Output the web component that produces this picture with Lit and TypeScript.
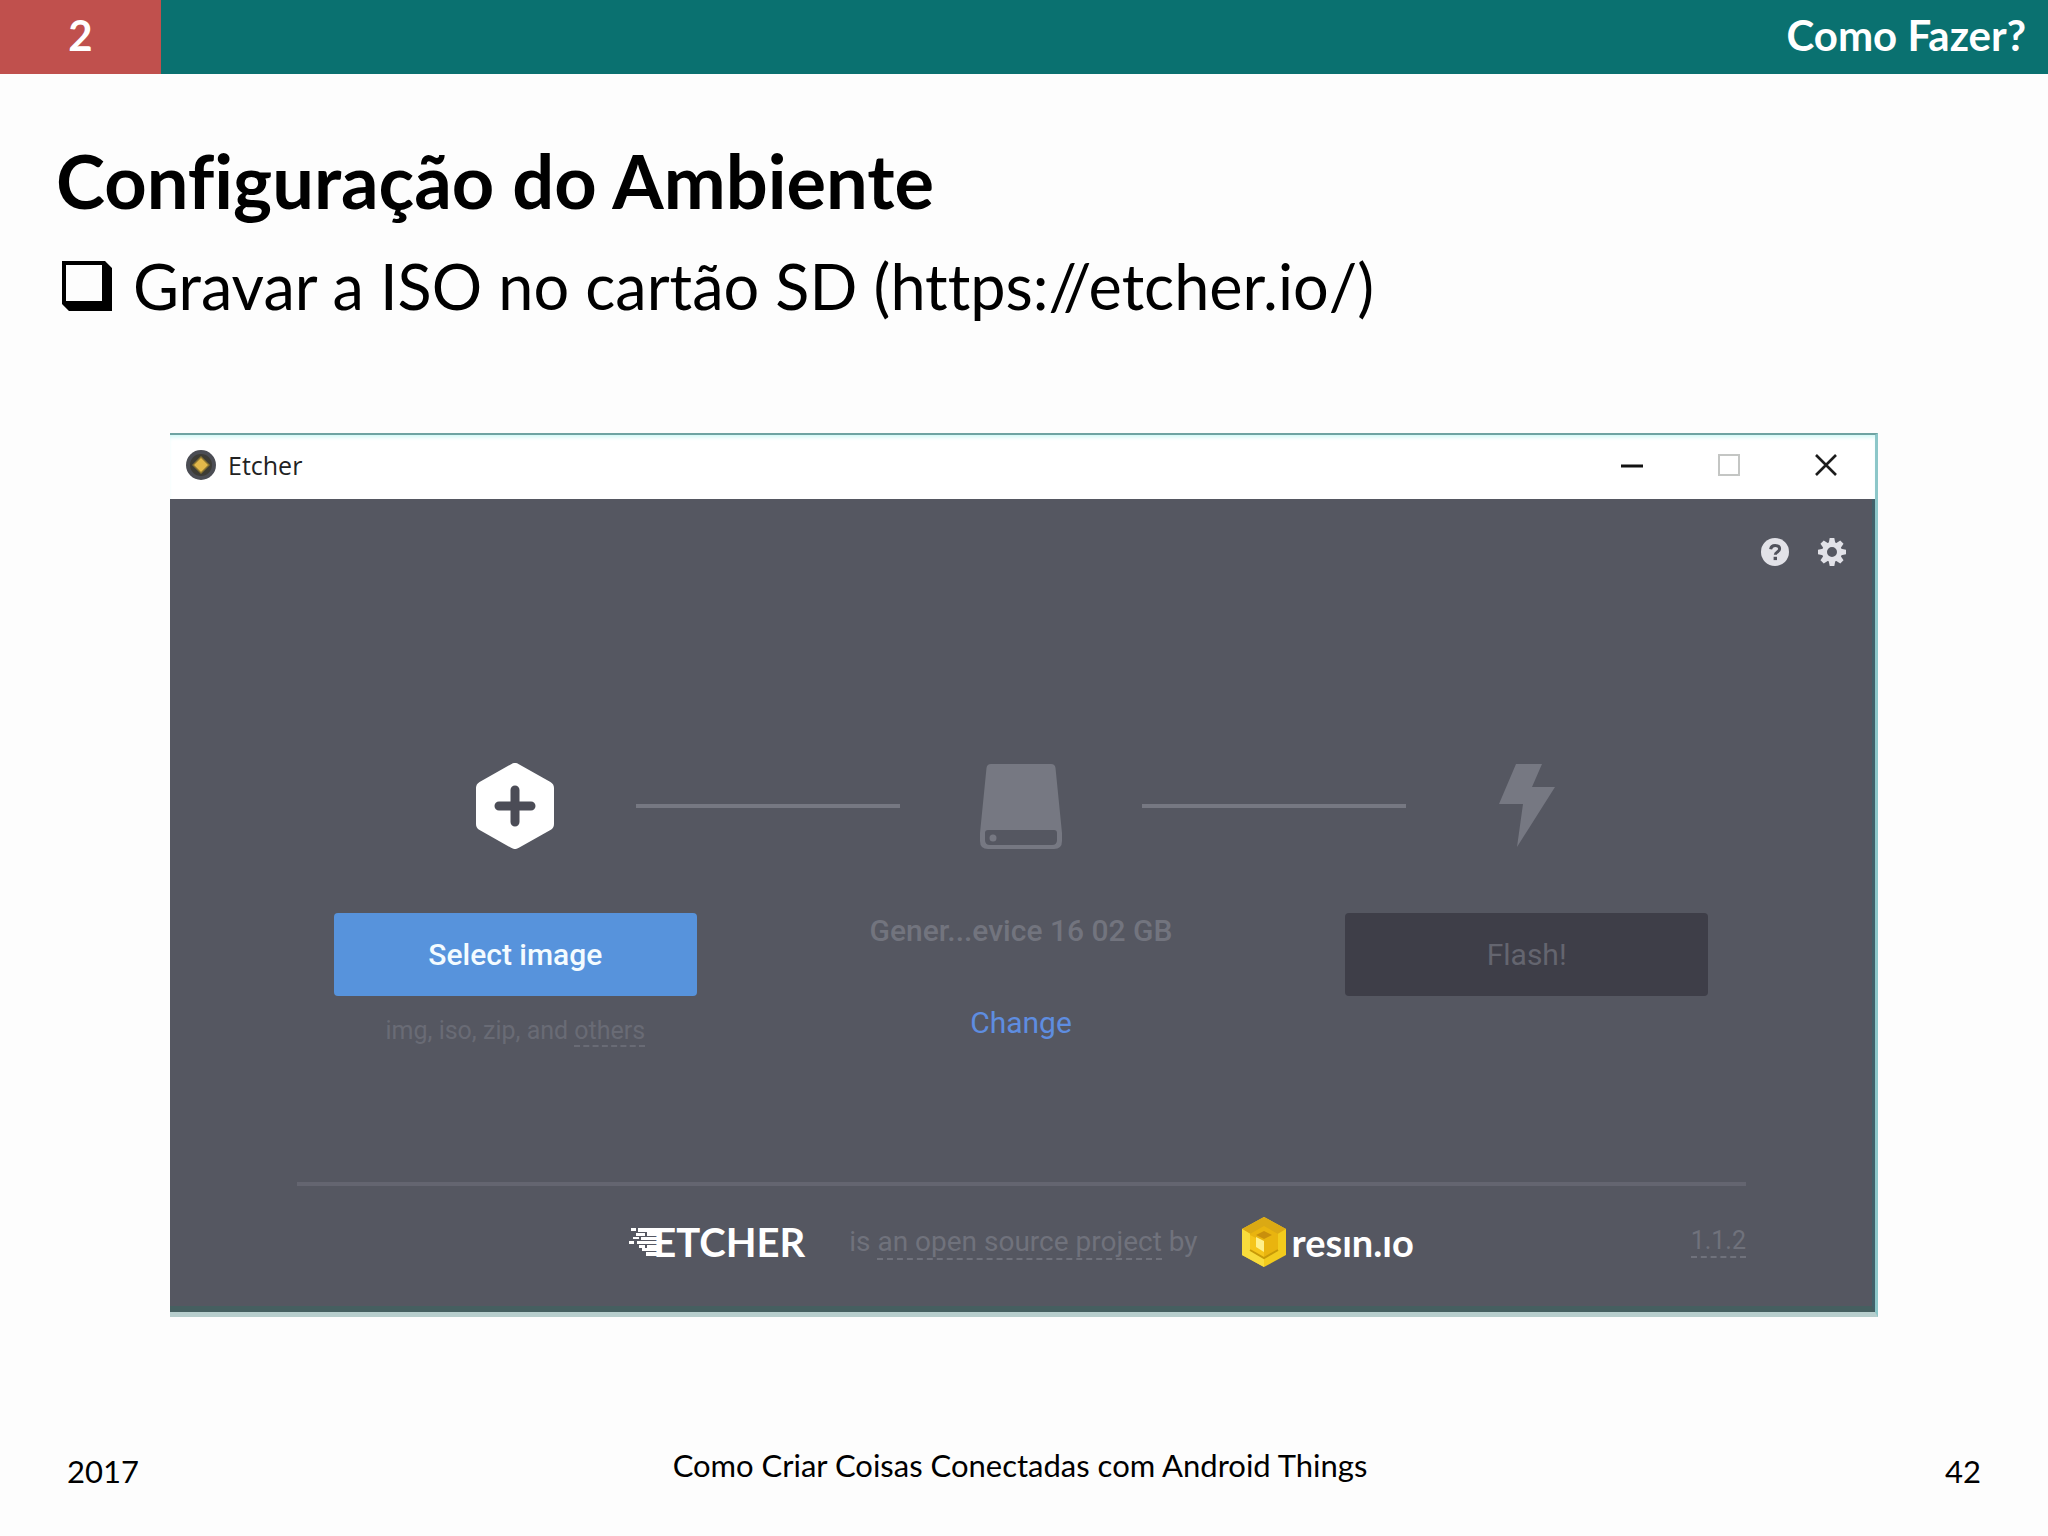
import { LitElement, html, css, svg } from "lit";
import { customElement } from "lit/decorators.js";

const appIcon = svg`<svg class="app-icon" viewBox="0 0 30 30" aria-hidden="true">
  <circle cx="15" cy="15" r="15" fill="#4b4d54"/>
  <circle cx="15" cy="15" r="11" fill="#3d3c35"/>
  <path d="M15 6l9 9-9 9-9-9z" fill="#8a7430"/>
  <path d="M15 8l7 7-7 7-7-7z" fill="#e2b84a"/>
</svg>`;

const minimizeIcon = svg`<svg class="caption-icon" viewBox="0 0 22 22" aria-hidden="true">
  <path d="M0 12h22" stroke="#111" stroke-width="3"/>
</svg>`;

const maximizeIcon = svg`<svg class="caption-icon" viewBox="0 0 22 22" aria-hidden="true">
  <path d="M1 1h20v20H1z" fill="none" stroke="#c4c6c4" stroke-width="2"/>
</svg>`;

const closeIcon = svg`<svg class="caption-icon" viewBox="0 0 22 22" aria-hidden="true">
  <path d="M1 1l20 20M21 1L1 21" stroke="#1c1c1c" stroke-width="2.6"/>
</svg>`;

const helpIcon = svg`<svg class="tool-icon" viewBox="0 0 28 28" aria-hidden="true">
  <circle cx="14" cy="14" r="14" fill="#e2e2e8"/>
  <path d="M9.600 11.200c.4-2.600 2-3.800 4.500-3.800 2.600 0 4.500 1.400 4.500 3.600 0 2.900-4.300 3-4.300 5.700" fill="none" stroke="#50525c" stroke-width="3"/>
  <path d="M12.600 18.800h3.400v3.300h-3.400z" fill="#50525c"/>
</svg>`;

const gearIcon = svg`<svg class="tool-icon" viewBox="0 0 28 28" aria-hidden="true">
  <g fill="#e2e2e8">
    ${[0, 45, 90, 135, 180, 225, 270, 315].map(
      (a) => svg`<path d="M10.500 6l1.200-6h4.600L17.500 6z" transform="rotate(${a} 14 14)"/>`
    )}
  </g>
  <circle cx="14" cy="14" r="7.500" fill="none" stroke="#e2e2e8" stroke-width="5"/>
</svg>`;

const plusIcon = svg`<svg class="step-icon" viewBox="0 0 84 86" aria-hidden="true">
  <path d="M42 7L74 25V61L42 79L10 61V25Z" fill="#fff" stroke="#fff" stroke-width="14" stroke-linejoin="round"/>
  <path d="M42 27v32M26 43h32" stroke="#4b4c56" stroke-width="9" stroke-linecap="round"/>
</svg>`;

const driveIcon = svg`<svg class="step-icon" viewBox="0 0 84 86" aria-hidden="true">
  <path fill-rule="evenodd" fill="#767882" d="M12 1h60q4 0 4.500 4L83 70v8q0 8-8 8H9q-8 0-8-8v-8L7.500 5Q8 1 12 1zM9 67q-3 0-3 3v7q0 5 5 5h62q5 0 5-5v-7q0-3-3-3z"/>
  <circle cx="14" cy="75" r="3.500" fill="#767882"/>
</svg>`;

const boltIcon = svg`<svg class="step-icon" viewBox="0 0 84 86" aria-hidden="true">
  <path fill="#767882" d="M31 1H57L47 24H70L32 84L38 41H14Z"/>
</svg>`;

const streaks = svg`<svg class="streaks" viewBox="0 0 30 28" aria-hidden="true">
  <path fill="#fff" d="M2 0h5v3H2zM9 0h21v4H9zM7 5h9v3H7zM18 4h12v4H18zM12 9h18v3H12zM4 9h6v2H4zM0 13h5v3H0zM8 13h22v3H8zM10 17h6v3h-6zM18 17h12v3H18zM13 20h17v3H13zM17 24h13v4H17z"/>
</svg>`;

const cube = svg`<svg class="cube" viewBox="0 0 44 50" aria-hidden="true">
  <path d="M22 0L44 12V38L22 50L0 38V12Z" fill="#f2cb1d"/>
  <path d="M22 0L44 12L22 25L0 12Z" fill="#dba914"/>
  <path d="M0 12L22 25V50L0 38Z" fill="#f8dc3c"/>
  <path d="M22 9L36 17V33L22 41L8 33V17Z" fill="#e9b40f"/>
  <path d="M8 18L22 25V41L8 33Z" fill="#f5c51a"/>
  <path d="M14 18l8-4 8 4-8 4z" fill="#c98f0c"/>
  <path d="M14 20l8 4v11l-8-5z" fill="#fff08a"/>
  <path d="M8 33l14 8 14-8" fill="none" stroke="#c79a08" stroke-width="2"/>
</svg>`;

@customElement("etcher-window")
export class EtcherWindow extends LitElement {
  static styles = css`
    :host {
      display: block;
      border-top: 2px solid #6fa3a2;
      border-right: 3px solid #8dc7c9;
      border-bottom: 5px solid #b7cecd;
      font-family: Roboto, "Liberation Sans", sans-serif;
    }
    button {
      border: 0;
      padding: 0;
      background: none;
      font: inherit;
      color: inherit;
      display: block;
    }
    svg { display: block; }
    .titlebar {
      display: flex;
      align-items: center;
      box-sizing: border-box;
      height: 64px;
      padding: 0 38px 4px 16px;
      background: #fff;
      box-shadow: inset 0 4px 4px -2px #cdf8f6;
    }
    .app-icon { width: 30px; height: 30px; }
    .name {
      flex: 1;
      margin-left: 12px;
      font: 25px/32px "Open Sans", "Noto Sans", sans-serif;
      color: #222;
    }
    .captions { display: flex; gap: 75px; }
    .caption-icon { width: 22px; height: 22px; }
    .body {
      background: #555761;
      border-right: 3px solid #41616a;
      border-bottom: 6px solid #455f60;
      padding-top: 39px;
    }
    .tools {
      display: flex;
      justify-content: flex-end;
      gap: 29px;
      padding-right: 26px;
    }
    .tool-icon { width: 28px; height: 28px; }
    .flow {
      display: flex;
      align-items: center;
      gap: 79px;
      margin-top: 197px;
      padding: 0 303px;
    }
    .step-icon { width: 84px; height: 86px; }
    .link-line { flex: 1; height: 4px; background: #767882; }
    .steps {
      display: grid;
      grid-template-columns: repeat(3, 1fr);
      gap: 143px;
      padding: 0 164px;
      margin-top: 64px;
      height: 202px;
    }
    .step { display: flex; flex-direction: column; align-items: center; white-space: nowrap; }
    .action {
      width: 100%;
      height: 83px;
      border-radius: 4px;
      font-size: 30px;
      font-weight: 500;
      text-align: center;
    }
    .primary { background: #5793dc; color: #f3fbff; }
    .disabled { background: #3e3e48; color: #64656f; font-weight: 400; }
    .hint { margin: 20px 0 0; font-size: 25px; line-height: 30px; color: #696b75; }
    .drive { margin: 0; font-size: 30px; line-height: 36px; color: #72747e; font-weight: 500; }
    .change { margin-top: 56px; font-size: 30px; line-height: 36px; color: #5e8de0; }
    a { color: inherit; text-decoration: none; border-bottom: 2px dashed currentColor; }
    .footer {
      display: grid;
      grid-template-columns: 1fr auto 1fr;
      align-items: center;
      margin: 67px 126px 0 127px;
      height: 112px;
      padding-bottom: 8px;
      border-top: 4px solid #646570;
      color: #70727c;
      font-size: 28px;
      line-height: 30px;
    }
    .credits { grid-column: 2; display: flex; align-items: center; gap: 44px; white-space: nowrap; }
    .brand { display: flex; align-items: center; color: #fff; font-family: Lato, sans-serif; font-weight: 700; }
    .streaks { width: 30px; height: 28px; }
    .etcher { font-size: 40px; line-height: 40px; }
    .etcher .word { margin-left: -6px; }
    .cube { width: 44px; height: 50px; margin-right: 6px; }
    .resin { font-size: 38px; line-height: 40px; }
    .version { justify-self: end; font-size: 25px; }
  `;

  render() {
    return html`
      <div class="titlebar">
        ${appIcon}
        <span class="name">Etcher</span>
        <div class="captions">
          <button aria-label="Minimize">${minimizeIcon}</button>
          <button aria-label="Maximize">${maximizeIcon}</button>
          <button aria-label="Close">${closeIcon}</button>
        </div>
      </div>
      <div class="body">
        <div class="tools">
          <button aria-label="Help">${helpIcon}</button>
          <button aria-label="Settings">${gearIcon}</button>
        </div>
        <div class="flow">
          ${plusIcon}
          <span class="link-line"></span>
          ${driveIcon}
          <span class="link-line"></span>
          ${boltIcon}
        </div>
        <div class="steps">
          <div class="step">
            <button class="action primary">Select image</button>
            <p class="hint">img, iso, zip, and <a href="#formats">others</a></p>
          </div>
          <div class="step">
            <p class="drive">Gener...evice 16 02 GB</p>
            <button class="change">Change</button>
          </div>
          <div class="step">
            <button class="action disabled" disabled>Flash!</button>
          </div>
        </div>
        <div class="footer">
          <div class="credits">
            <span class="brand etcher">${streaks}<span class="word">ETCHER</span></span>
            <span>is <a href="#source">an open source project</a> by</span>
            <span class="brand resin">${cube}resın.ıo</span>
          </div>
          <a class="version" href="#version">1.1.2</a>
        </div>
      </div>
    `;
  }
}

@customElement("app-root")
export class AppRoot extends LitElement {
  static styles = css`
    :host {
      display: flex;
      flex-direction: column;
      min-height: 100vh;
      background: #fdfdfd;
      color: #000;
      font-family: Lato, "Open Sans", sans-serif;
      font-variant-ligatures: none;
    }
    .bar {
      display: flex;
      height: 74px;
      background: #0a7170;
      color: #fff;
      font-size: 42px;
      font-weight: 700;
      line-height: 70px;
    }
    .section { width: 161px; background: #c0504d; text-align: center; }
    .topic { flex: 1; text-align: right; padding-right: 22px; }
    .content { padding: 65px 56px 0; }
    h1 { margin: 0; font-size: 74px; line-height: 84px; font-weight: 700; }
    ul { list-style: none; margin: 21px 0 0; padding: 0 6px; }
    li { display: flex; align-items: center; gap: 21px; font-size: 63px; line-height: 84px; }
    .box { width: 50px; height: 50px; flex: none; }
    etcher-window { margin: 105px 170px 0; }
    .foot {
      display: grid;
      grid-template-columns: 1fr auto 1fr;
      align-items: end;
      margin-top: auto;
      padding: 0 67px 45px;
      font-size: 31px;
      line-height: 40px;
    }
    .deck { padding: 0 8px 6px 0; }
    .page { text-align: right; }
  `;

  render() {
    return html`
      <header class="bar">
        <span class="section">2</span>
        <span class="topic">Como Fazer?</span>
      </header>
      <main class="content">
        <h1>Configuração do Ambiente</h1>
        <ul>
          <li>
            <svg class="box" viewBox="0 0 50 50" aria-hidden="true">
              <path fill-rule="evenodd" d="M0 0H43L50 7V50H7L0 43ZM4 4V40H40V4Z" />
            </svg>
            <span>Gravar a ISO no cartão SD (https://etcher.io/)</span>
          </li>
        </ul>
      </main>
      <etcher-window></etcher-window>
      <footer class="foot">
        <span>2017</span>
        <span class="deck">Como Criar Coisas Conectadas com Android Things</span>
        <span class="page">42</span>
      </footer>
    `;
  }
}
